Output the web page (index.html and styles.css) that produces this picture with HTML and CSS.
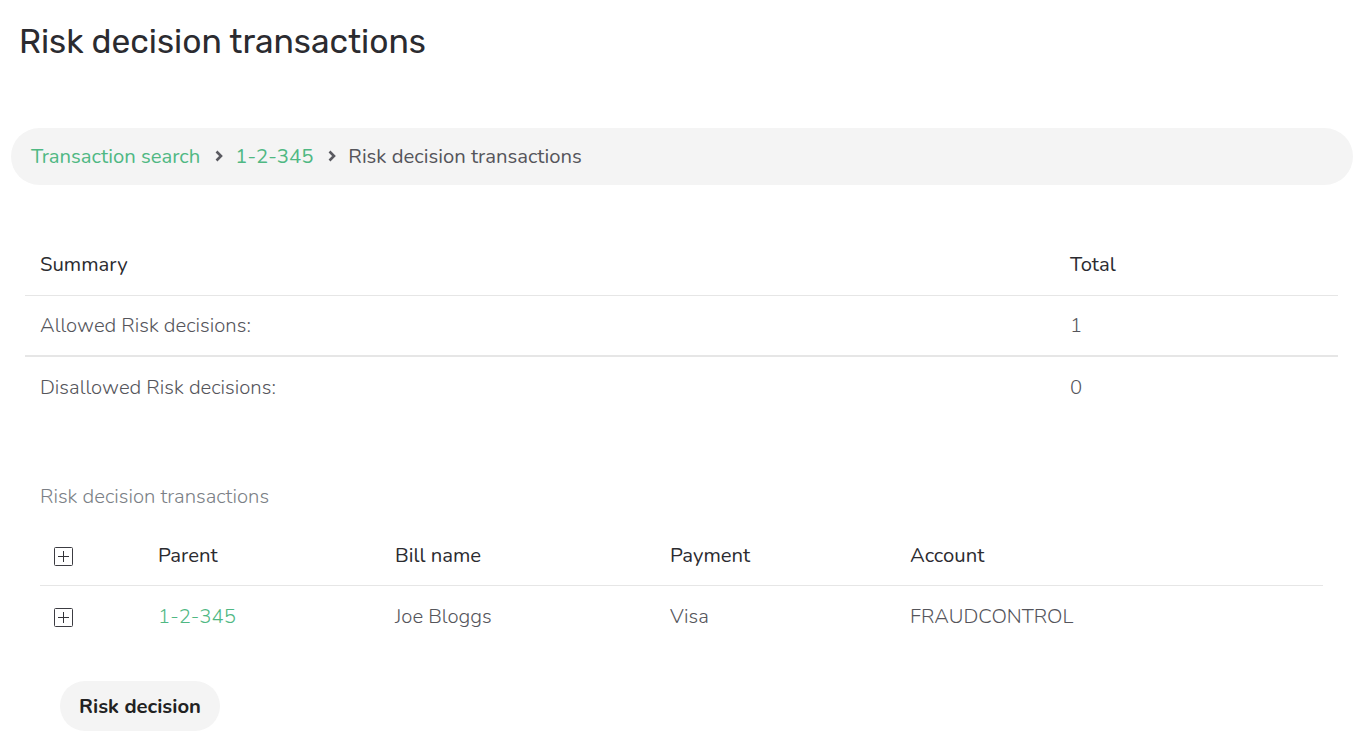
FILE: index.html
```html
<!DOCTYPE html>
<html lang="en">
<head>
<meta charset="utf-8">
<title>Risk decision transactions</title>
<link rel="stylesheet" href="styles.css">
</head>
<body>
<main class="page">
  <h1 class="title">Risk decision transactions</h1>

  <nav class="crumbs" aria-label="Breadcrumb">
    <a class="crumb-link" href="#">Transaction search</a>
    <svg class="chev" viewBox="0 0 10 12" width="10" height="12" aria-hidden="true"><path d="M2.5 1.5 L7 6 L2.5 10.5" fill="none" stroke="#5a5a60" stroke-width="2.6" stroke-linejoin="miter"/></svg>
    <a class="crumb-link" href="#">1-2-345</a>
    <svg class="chev" viewBox="0 0 10 12" width="10" height="12" aria-hidden="true"><path d="M2.5 1.5 L7 6 L2.5 10.5" fill="none" stroke="#5a5a60" stroke-width="2.6" stroke-linejoin="miter"/></svg>
    <span class="crumb-current">Risk decision transactions</span>
  </nav>

  <section class="summary">
    <table class="sum-table">
      <colgroup><col><col class="sum-total-col"></colgroup>
      <thead>
        <tr><th>Summary</th><th>Total</th></tr>
      </thead>
      <tbody>
        <tr><td>Allowed Risk decisions:</td><td>1</td></tr>
        <tr class="last"><td>Disallowed Risk decisions:</td><td>0</td></tr>
      </tbody>
    </table>
  </section>

  <section class="rdt">
    <h2 class="caption">Risk decision transactions</h2>
    <table class="rdt-table">
      <colgroup>
        <col class="c1"><col class="c2"><col class="c3"><col class="c4"><col>
      </colgroup>
      <thead>
        <tr>
          <th><span class="plus" aria-label="Expand all"></span></th>
          <th>Parent</th><th>Bill name</th><th>Payment</th><th>Account</th>
        </tr>
      </thead>
      <tbody>
        <tr>
          <td><span class="plus" aria-label="Expand"></span></td>
          <td><a class="crumb-link" href="#">1-2-345</a></td>
          <td>Joe Bloggs</td><td>Visa</td><td>FRAUDCONTROL</td>
        </tr>
      </tbody>
    </table>
  </section>

  <div class="actions">
    <button class="btn" type="button">Risk decision</button>
  </div>
</main>
</body>
</html>
```

FILE: styles.css
```css
* { box-sizing: border-box; }
html, body { margin: 0; padding: 0; background: #fff; }
body {
  font-family: "Nunito", "Lato", "Open Sans", sans-serif;
  color: #4a4a4f;
  font-size: 20.3px;
}
.page { padding: 0 13px 0 11px; }

.title {
  margin: 0;
  padding: 20px 0 0 8px;
  height: 128px;
  font-family: "Rubik", "Noto Sans", "Inter", sans-serif;
  font-weight: 400;
  font-size: 33.6px;
  line-height: 44px;
  color: #2b2b30;
}

.crumbs {
  display: flex;
  align-items: center;
  height: 57px;
  border-radius: 29px;
  background: #f4f4f4;
  padding: 0 0 2px 20px;
}
.crumb-link { color: #4fb883; text-decoration: none; }
.chev { margin: 0 11px 0 14px; }
.crumb-current { color: #55555b; }

.summary { padding: 49px 15px 0 14px; }
.sum-table, .rdt-table {
  width: 100%;
  border-collapse: collapse;
  table-layout: fixed;
}
.sum-total-col { width: 283px; }
.sum-table th, .sum-table td {
  text-align: left;
  padding: 0 15px;
  height: 61px;
  font-weight: 400;
}
.sum-table th { color: #2b2b30; border-bottom: 1px solid #e6e6e6; }
.sum-table td { color: #55555b; font-weight: 300; }
.sum-table tbody tr:first-child td { border-bottom: 2px solid #e6e6e6; }

.rdt { padding: 65px 30px 0 29px; }
.caption {
  margin: 0 0 15px 0;
  font-size: 20.3px;
  font-weight: 300;
  color: #7b7f86;
  line-height: 28px;
}
.c1 { width: 104px; }
.c2 { width: 237px; }
.c3 { width: 275px; }
.c4 { width: 240px; }
.rdt-table th, .rdt-table td {
  text-align: left;
  padding: 0 14px;
  height: 61px;
  font-weight: 400;
}
.rdt-table th { height: 60px; color: #2b2b30; border-bottom: 1px solid #e6e6e6; }
.rdt-table td { color: #55555b; font-weight: 300; }

.plus {
  display: inline-block;
  position: relative;
  width: 19px;
  height: 19px;
  border: 1.5px solid #3c3c42;
  border-radius: 1.5px;
  vertical-align: middle;
}
.plus::before, .plus::after {
  content: "";
  position: absolute;
  background: #333338;
}
.plus::before { left: 3px; right: 3px; top: 7.5px; height: 1.5px; }
.plus::after { top: 3px; bottom: 3px; left: 7.5px; width: 1.5px; }

.actions { padding: 35px 0 0 49px; }
.btn {
  font-family: inherit;
  font-size: 20.3px;
  font-weight: 700;
  color: #222;
  background: #f4f4f4;
  border: none;
  border-radius: 25px;
  height: 50px;
  width: 160px;
  padding: 0;
}
```
